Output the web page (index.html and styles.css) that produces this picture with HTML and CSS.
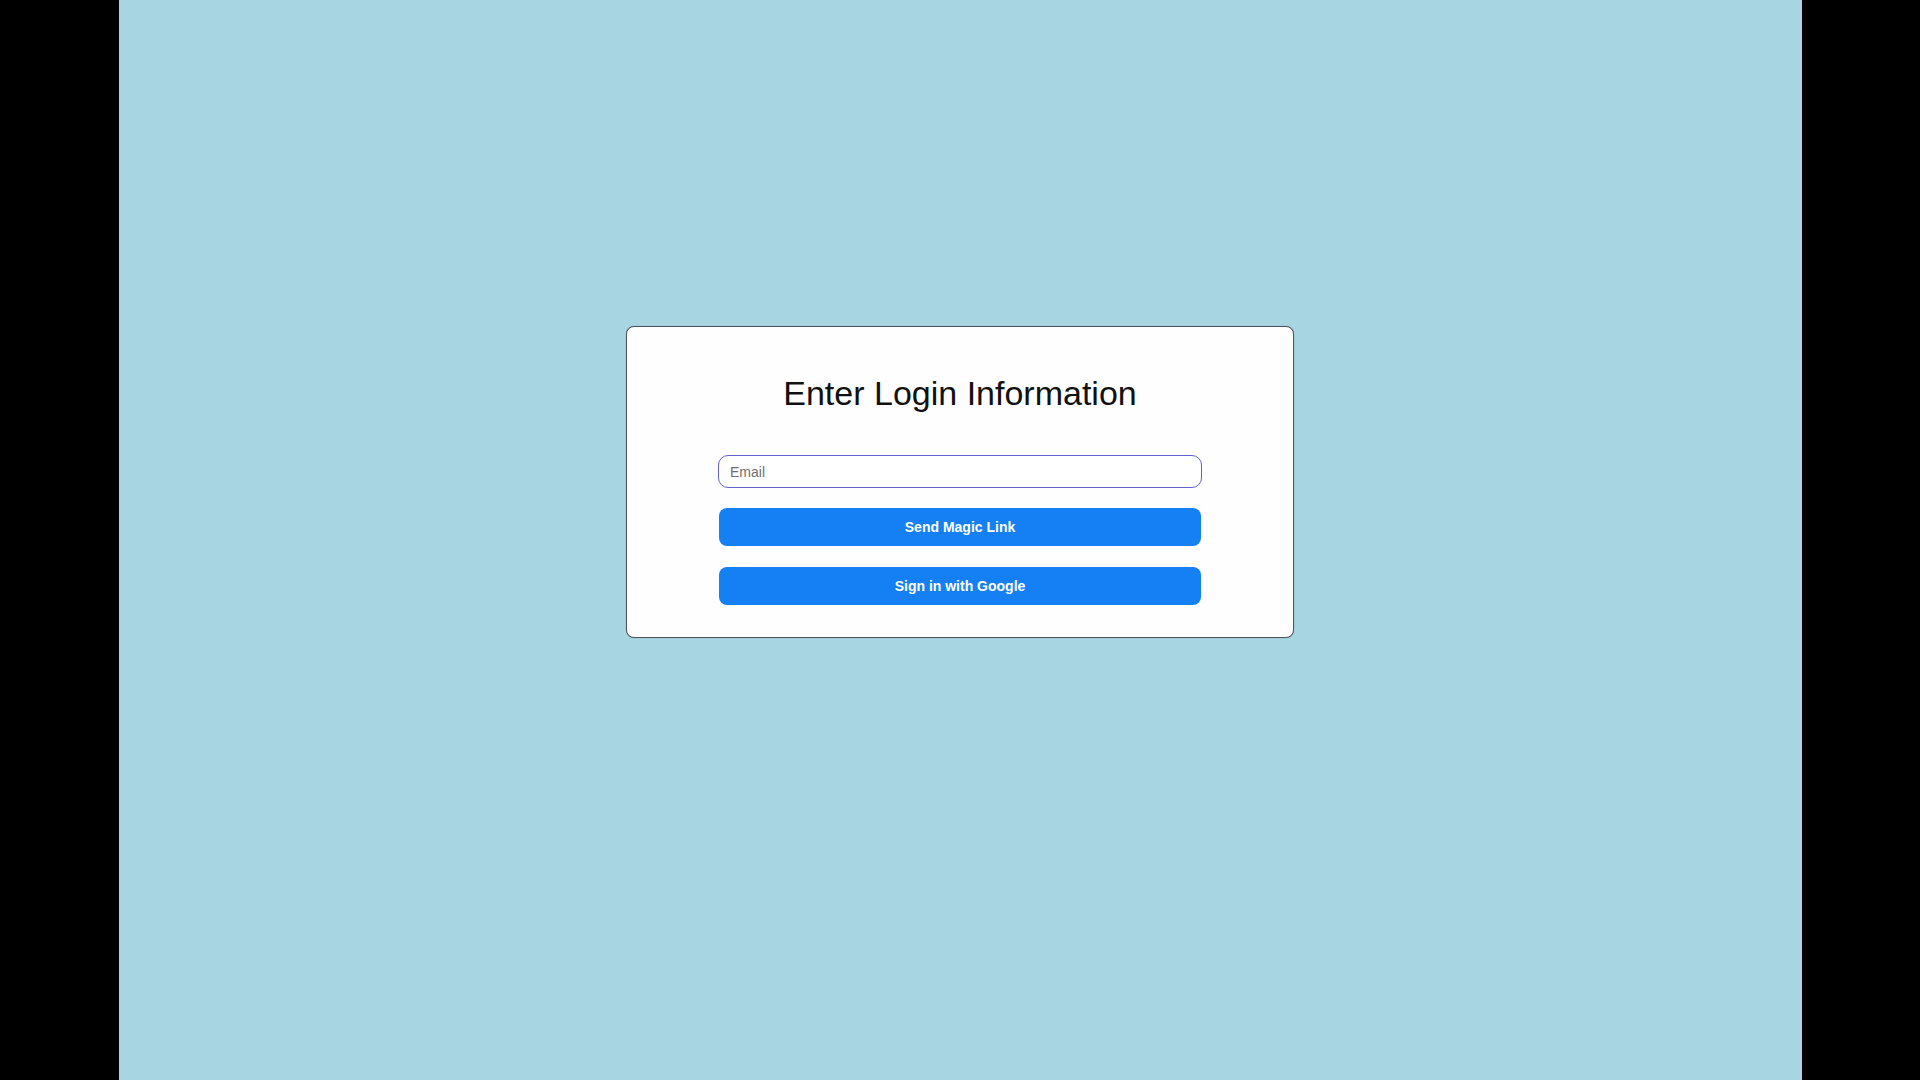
FILE: index.html
```html
<!DOCTYPE html>
<html lang="en">
<head>
<meta charset="utf-8">
<title>Login</title>
<link rel="stylesheet" href="styles.css">
</head>
<body>
<div class="frame">
  <main class="stage">
    <section class="card">
      <h1 class="title">Enter Login Information</h1>
      <form class="form">
        <input class="email" type="email" placeholder="Email">
        <button type="button" class="btn">Send Magic Link</button>
        <button type="button" class="btn">Sign in with Google</button>
      </form>
    </section>
  </main>
</div>
</body>
</html>
```
FILE: styles.css
```css
html, body {
  margin: 0;
  padding: 0;
  height: 100%;
}
body {
  background: #000;
  font-family: "Liberation Sans", Arial, sans-serif;
}
.frame {
  display: flex;
  justify-content: center;
  height: 1080px;
}
.stage {
  width: 1683px;
  height: 1080px;
  background: #a7d6e2;
  display: flex;
  flex-direction: column;
  align-items: center;
  padding-top: 326px;
  box-sizing: border-box;
}
.card {
  width: 668px;
  box-sizing: border-box;
  background: #fefefe;
  border: 1px solid #4d5358;
  border-radius: 8px;
  box-shadow: 0 0 1px rgba(0,0,0,0.4);
  padding: 46px 0 32px;
  display: flex;
  flex-direction: column;
  align-items: center;
}
.title {
  margin: 0;
  font-size: 34px;
  line-height: 40px;
  font-weight: 400;
  color: #111;
}
.form {
  margin-top: 42px;
  display: flex;
  flex-direction: column;
  align-items: center;
}
.email {
  width: 484px;
  height: 33px;
  box-sizing: border-box;
  border: 1.5px solid #6363c9;
  border-radius: 10px;
  padding: 0 11px;
  font-family: "Liberation Sans", Arial, sans-serif;
  font-size: 14px;
  color: #333;
  background: #fff;
  outline: none;
}
.email::placeholder {
  color: #6f6f6f;
}
.btn {
  width: 482px;
  height: 38px;
  margin-top: 20px;
  border: none;
  border-radius: 8px;
  background: #1580f3;
  color: #fff;
  font-family: "Liberation Sans", Arial, sans-serif;
  font-size: 14px;
  font-weight: 700;
  cursor: pointer;
}
.btn + .btn {
  margin-top: 21px;
}
```
